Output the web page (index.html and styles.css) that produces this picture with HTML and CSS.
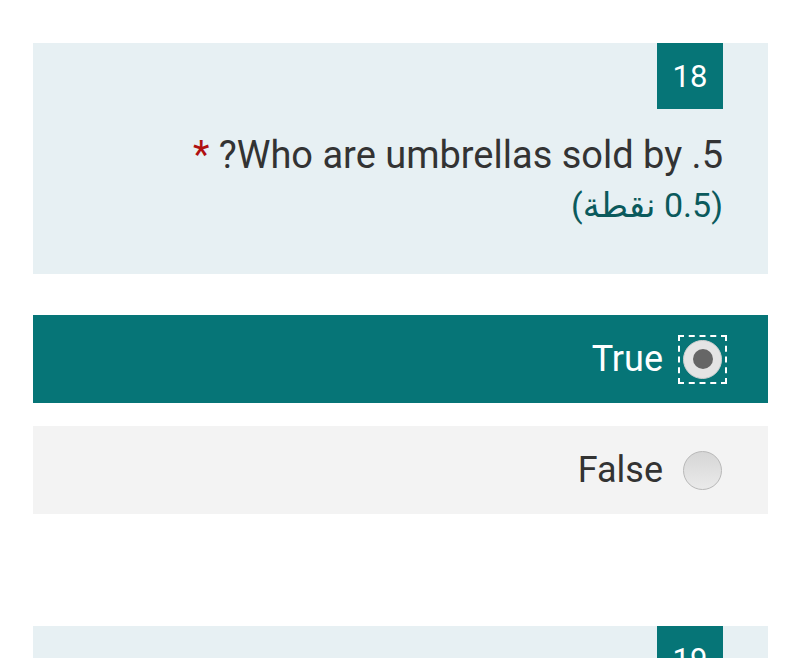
FILE: index.html
```html
<html dir="rtl">
  <head>
    <title>Quiz</title>
    <link rel="stylesheet" href="styles.css">
  </head>
  <body>
    <div class="page">
      <div class="question">
        <div class="number">18</div>
        <div class="title">5. Who are umbrellas sold by? <span class="required">*</span></div>
        <div class="points">(0.5 نقطة)</div>
      </div>
      <div class="answers">
        <label class="answer selected">
          <span class="radio focused"><span class="dot"></span></span>
          <span class="label">True</span>
        </label>
        <label class="answer">
          <span class="radio"></span>
          <span class="label">False</span>
        </label>
      </div>
      <div class="question next">
        <div class="number">19</div>
      </div>
    </div>
  </body>
</html>
```

FILE: styles.css
```css
body {
  margin: 0;
  background-color: #ffffff;
  font-family: Roboto, "Noto Sans", "DejaVu Sans", sans-serif;
  color: #333333;
}

.page {
  padding: 43px 32px 0 33px;
}

.question {
  background-color: #e7f0f3;
  padding: 0 45px 44px 45px;
  display: flex;
  flex-direction: column;
  align-items: flex-start;
}
.number {
  width: 66px;
  height: 66px;
  background-color: #067577;
  color: #ffffff;
  font-size: 31px;
  display: flex;
  align-items: center;
  justify-content: center;
}
.title {
  margin-top: 21px;
  font-size: 38px;
  line-height: 50px;
}
.required {
  color: #b01010;
}
.points {
  font-size: 34px;
  line-height: 50px;
  color: #0b5a5c;
}

.answers {
  margin-top: 41px;
  display: flex;
  flex-direction: column;
  gap: 23px;
}
.answer {
  height: 88px;
  background-color: #f3f3f3;
  display: flex;
  align-items: center;
  gap: 20px;
  padding-right: 46px;
  font-size: 36px;
}
.answer.selected {
  background-color: #067577;
  color: #ffffff;
}
.radio {
  width: 37px;
  height: 37px;
  border-radius: 50%;
  border: 1px solid #b8b8b8;
  background: linear-gradient(#d6d6d6, #eaeaea);
  display: flex;
  align-items: center;
  justify-content: center;
  position: relative;
}
.radio.focused {
  border-color: #cfcfcf;
  background: #e4e4e4;
}
.radio.focused::after {
  content: "";
  position: absolute;
  top: -6px;
  bottom: -6px;
  left: -6px;
  right: -6px;
  border: 2px dashed #ffffff;
}
.dot {
  width: 20px;
  height: 20px;
  border-radius: 50%;
  background-color: #666666;
}

.question.next {
  margin-top: 112px;
  height: 80px;
}
```
